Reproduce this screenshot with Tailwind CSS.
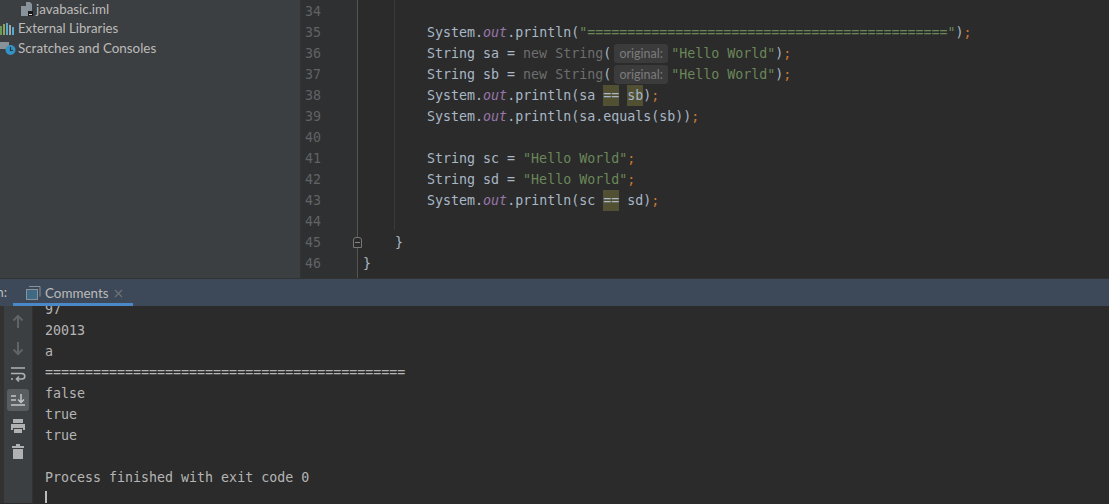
<!DOCTYPE html>
<html><head><script src="https://cdn.jsdelivr.net/npm/@tailwindcss/browser@4"></script></head>
<body class="w-[1109px] h-[504px] overflow-hidden bg-[#2b2b2b] font-['DejaVu_Sans_Mono',monospace] text-[13.3px] text-[#a9b7c6]">
<div class="flex h-[279px] border-b border-[#323232]">
  <aside class="w-[301px] shrink-0 bg-[#3c3f41] border-r border-[#323232] font-['Lato',sans-serif] text-[13.4px] text-[#bbbbbb] overflow-hidden">
    <div class="h-[20px] mt-[-1px] flex items-center gap-[3px] pl-[20px]">
      <svg class="w-[13px] h-[14px]" viewBox="0 0 13 14"><path d="M1 4h5V0h4l2 2v7H9v5H1z" fill="#9aa7b0" opacity=".8"/><rect x="8" y="9" width="5" height="5" fill="#1a1a1a"/><rect x="9" y="12" width="3" height="1" fill="#ddd"/></svg>
      <span>javabasic.iml</span>
    </div>
    <div class="h-[20px] flex items-center gap-[3px]">
      <svg class="w-[15px] h-[12px]" viewBox="0 0 15 12"><rect x="0" y="3" width="2" height="9" fill="#6a9a5a"/><rect x="3" y="1" width="2" height="11" fill="#8fa35e"/><rect x="6" y="0" width="2" height="12" fill="#59a8c8"/><rect x="9" y="2" width="2" height="10" fill="#9aa7b0"/><rect x="12" y="4" width="2" height="8" fill="#59a8c8"/></svg>
      <span class="text-[13.2px]">External Libraries</span>
    </div>
    <div class="h-[20px] mt-[-1px] flex items-center gap-[2px]">
      <svg class="w-[16px] h-[16px]" viewBox="0 0 16 16"><rect x="0" y="2" width="9" height="7" fill="#8a9299"/><circle cx="10.5" cy="10" r="5" fill="#3592c4"/><path d="M10.5 7v3.5h2.5" stroke="#24333d" stroke-width="1.2" fill="none"/></svg>
      <span>Scratches and Consoles</span>
    </div>
  </aside>
  <main class="relative flex-1 bg-[#2b2b2b] overflow-hidden leading-[21px] pt-[1px]">
    <div class="absolute left-0 top-0 bottom-0 w-[56px] bg-[#2f3031]"></div>
    <div class="absolute left-[56px] top-0 bottom-0 w-px bg-[#555555]"></div>
    <div class="absolute left-[93px] top-0 h-[230px] w-px bg-[#3b3b3b]"></div>
    <div class="absolute left-[52px] top-[237px] w-[9px] h-[11px] border border-[#777] bg-[#2b2b2b] rounded-t-[3px] flex items-center justify-center"><div class="w-[5px] h-px bg-[#888]"></div></div>
    <div class="relative">
<div class="flex h-[21px] whitespace-pre"><span class="w-[62px] pl-[4px] text-[#606366]">34</span><span></span></div>
<div class="flex h-[21px] whitespace-pre"><span class="w-[62px] pl-[4px] text-[#606366]">35</span><span>        System.<i class="text-[#9876aa]">out</i>.println(<span class="text-[#6a8759]">"============================================="</span>)<span class="text-[#cc7832]">;</span></span></div>
<div class="flex h-[21px] whitespace-pre"><span class="w-[62px] pl-[4px] text-[#606366]">36</span><span>        String sa = <span class="text-[#6e6e6e]">new String</span>(<span class="inline-block w-[54px] ml-[3px] mr-[3px] h-[19px] leading-[19px] rounded-[3px] bg-[#3b3b3b] text-center font-['Lato',sans-serif] text-[12.5px] text-[#7c7c7c]">original:</span><span class="text-[#6a8759]">"Hello World"</span>)<span class="text-[#cc7832]">;</span></span></div>
<div class="flex h-[21px] whitespace-pre"><span class="w-[62px] pl-[4px] text-[#606366]">37</span><span>        String sb = <span class="text-[#6e6e6e]">new String</span>(<span class="inline-block w-[54px] ml-[3px] mr-[3px] h-[19px] leading-[19px] rounded-[3px] bg-[#3b3b3b] text-center font-['Lato',sans-serif] text-[12.5px] text-[#7c7c7c]">original:</span><span class="text-[#6a8759]">"Hello World"</span>)<span class="text-[#cc7832]">;</span></span></div>
<div class="flex h-[21px] whitespace-pre"><span class="w-[62px] pl-[4px] text-[#606366]">38</span><span>        System.<i class="text-[#9876aa]">out</i>.println(sa <span class="inline-block h-[21px] bg-[#515033]">==</span> <span class="inline-block h-[21px] bg-[#515033]">sb</span>)<span class="text-[#cc7832]">;</span></span></div>
<div class="flex h-[21px] whitespace-pre"><span class="w-[62px] pl-[4px] text-[#606366]">39</span><span>        System.<i class="text-[#9876aa]">out</i>.println(sa.equals(sb))<span class="text-[#cc7832]">;</span></span></div>
<div class="flex h-[21px] whitespace-pre"><span class="w-[62px] pl-[4px] text-[#606366]">40</span><span></span></div>
<div class="flex h-[21px] whitespace-pre"><span class="w-[62px] pl-[4px] text-[#606366]">41</span><span>        String sc = <span class="text-[#6a8759]">"Hello World"</span><span class="text-[#cc7832]">;</span></span></div>
<div class="flex h-[21px] whitespace-pre"><span class="w-[62px] pl-[4px] text-[#606366]">42</span><span>        String sd = <span class="text-[#6a8759]">"Hello World"</span><span class="text-[#cc7832]">;</span></span></div>
<div class="flex h-[21px] whitespace-pre"><span class="w-[62px] pl-[4px] text-[#606366]">43</span><span>        System.<i class="text-[#9876aa]">out</i>.println(sc <span class="inline-block h-[21px] bg-[#515033]">==</span> sd)<span class="text-[#cc7832]">;</span></span></div>
<div class="flex h-[21px] whitespace-pre"><span class="w-[62px] pl-[4px] text-[#606366]">44</span><span></span></div>
<div class="flex h-[21px] whitespace-pre"><span class="w-[62px] pl-[4px] text-[#606366]">45</span><span>    }</span></div>
<div class="flex h-[21px] whitespace-pre"><span class="w-[62px] pl-[4px] text-[#606366]">46</span><span>}</span></div>
    </div>
  </main>
</div>
<div class="h-[27px] bg-[#3d4958] flex items-stretch font-['Lato',sans-serif] text-[13.4px] text-[#bbbbbb]">
  <span class="w-[7px] mr-[6px] overflow-hidden flex items-center justify-end">n:</span>
  <div class="w-[120px] pt-[4px] flex items-center border-b-[3px] border-[#4a88c7]">
    <svg class="ml-[13px] w-[15px] h-[14px]" viewBox="0 0 15 14"><path d="M3 .5h11v10" fill="none" stroke="#8a9299"/><rect x=".5" y="3.5" width="11" height="10" fill="#3f6a85" stroke="#8a9299"/></svg>
    <span class="ml-[4px]">Comments</span>
    <svg class="ml-[6px] w-[9px] h-[9px]" viewBox="0 0 9 9"><path d="M1 1l7 7M8 1l-7 7" stroke="#6e7274" stroke-width="1.2"/></svg>
  </div>
</div>
<div class="flex h-[197px] overflow-hidden">
  <div class="w-[33px] shrink-0 flex flex-col items-center bg-[#3c3f41] border-l-[4px] border-l-[#323232] border-r border-r-[#323232] pt-[6px] gap-[6px]">
    <svg class="w-[20px] h-[20px]" viewBox="0 0 20 20"><path d="M10 4v12M5.5 8.5L10 4l4.5 4.5" stroke="#5f6467" stroke-width="2" fill="none"/></svg>
    <svg class="w-[20px] h-[20px]" viewBox="0 0 20 20"><path d="M10 4v12M5.5 11.5L10 16l4.5-4.5" stroke="#5f6467" stroke-width="2" fill="none"/></svg>
    <svg class="w-[20px] h-[20px]" viewBox="0 0 20 20"><path d="M3 4h14M3 9.5h11a2.5 2.5 0 0 1 0 5.5H9M11 12.5L8.5 15l2.5 2.5M3 15h2" stroke="#afb1b3" stroke-width="1.6" fill="none"/></svg>
    <div class="w-[22px] h-[22px] -my-px rounded-[3px] bg-[#5a5d5f] flex items-center justify-center"><svg class="w-[16px] h-[14px]" viewBox="0 0 16 14"><path d="M1 3h5M1 7h5M1 12h14M11 1v8M8 6.5l3 3 3-3" stroke="#c4c6c8" stroke-width="1.5" fill="none"/></svg></div>
    <svg class="w-[20px] h-[20px]" viewBox="0 0 20 20"><path d="M5 3h10v4H5zM3 8h14v6h-2v-2H5v2H3zM6 13h8v4H6z" fill="#afb1b3"/></svg>
    <svg class="w-[20px] h-[20px]" viewBox="0 0 20 20"><path d="M8 2h4v2h4v2H4V4h4zM5 7h10v10H5z" fill="#afb1b3"/></svg>
  </div>
  <div class="flex-1 pl-[12px] leading-[21px] mt-[-6px] whitespace-pre text-[#b5b5b5]"><div class="h-[21px] mt-[-1px]">97</div><div class="h-[21px]">20013</div><div class="h-[21px]">a</div><div class="h-[21px]">=============================================</div><div class="h-[21px]">false</div><div class="h-[21px]">true</div><div class="h-[21px]">true</div><div class="h-[21px]"></div><div class="h-[21px]">Process finished with exit code 0</div><div class="h-[21px] flex items-center"><div class="w-[2px] h-[16px] bg-[#bbbbbb]"></div></div></div>
</div>
</body></html>
